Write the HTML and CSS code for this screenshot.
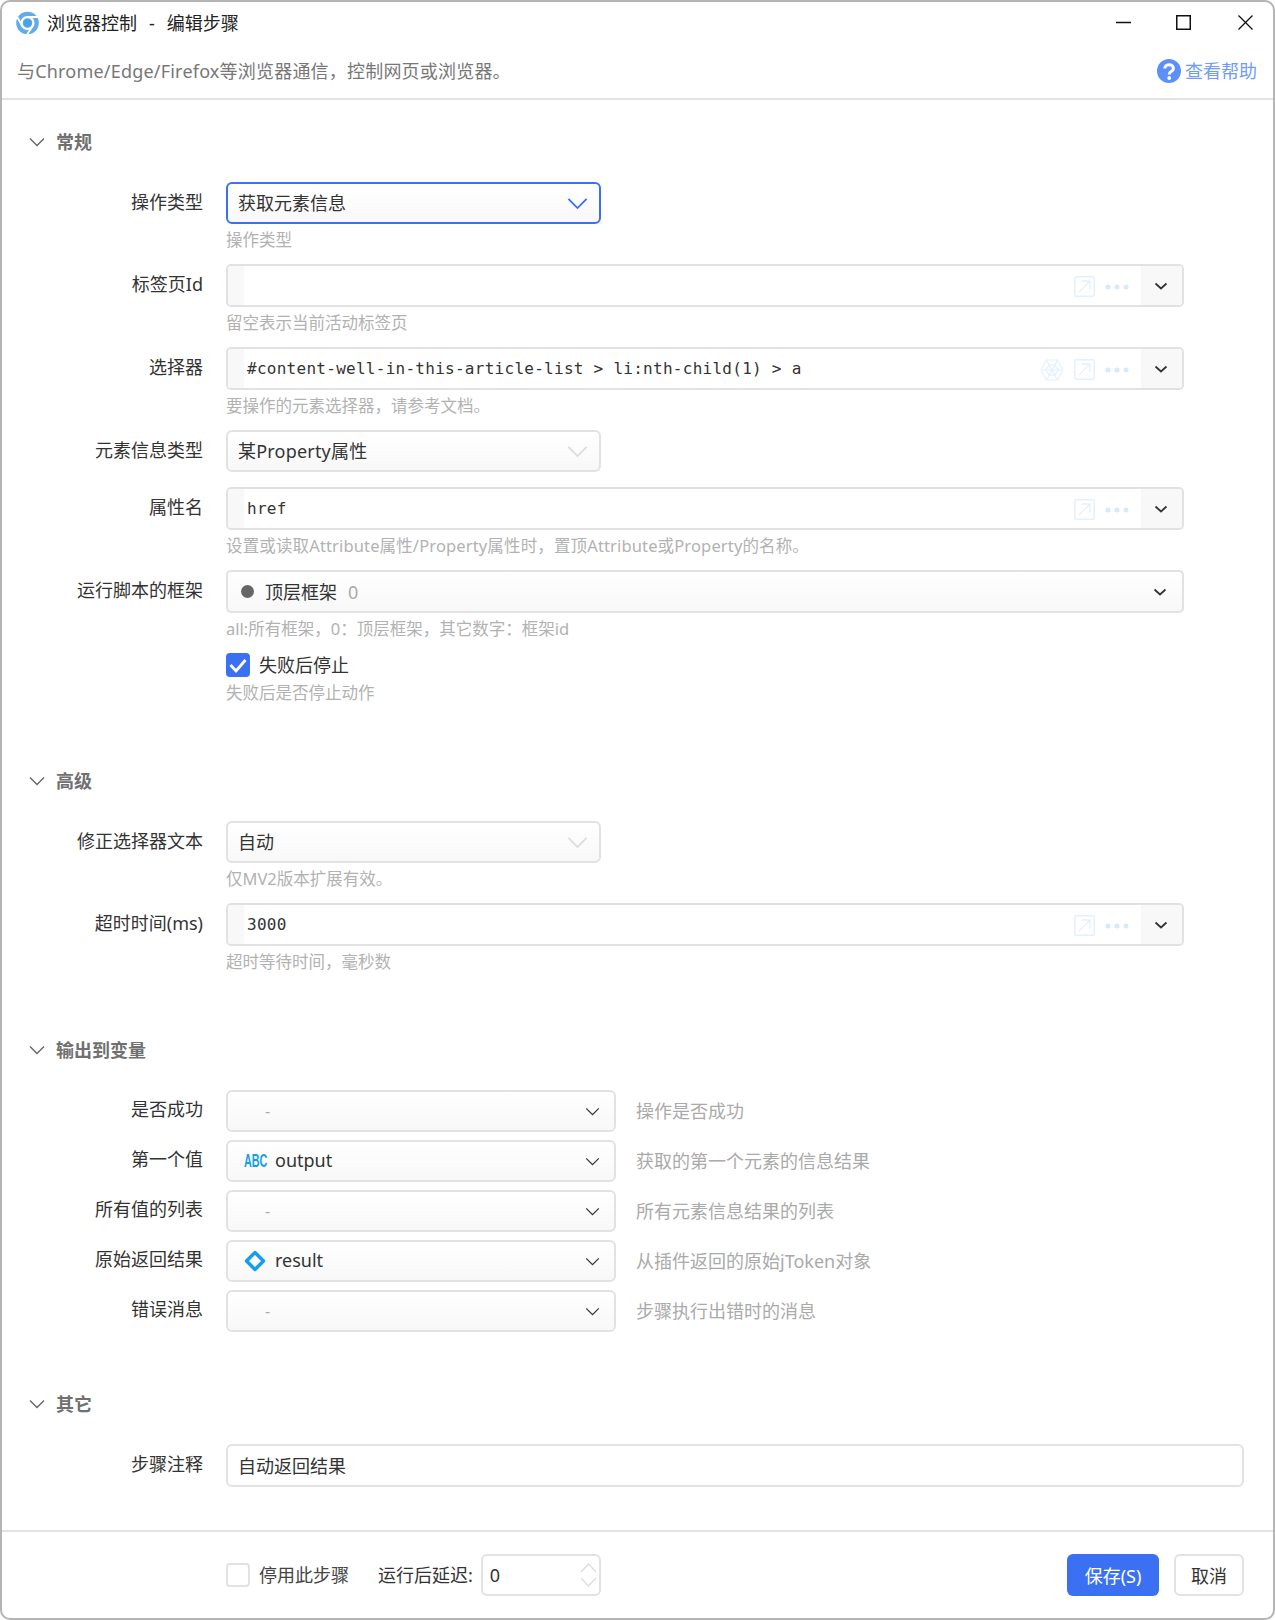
FILE: index.html
```html
<!DOCTYPE html>
<html lang="zh-CN">
<head>
<meta charset="utf-8">
<title>浏览器控制 - 编辑步骤</title>
<link rel="stylesheet" href="styles.css">
</head>
<body>
<svg class="defs" width="0" height="0" aria-hidden="true">
  <symbol id="chev" viewBox="0 0 16 10"><path d="M1 1.5 L8 8.5 L15 1.5" fill="none" stroke="currentColor" stroke-width="1.4"/></symbol>
  <symbol id="chevb" viewBox="0 0 14 8"><path d="M1.5 1.5 L7 6.5 L12.5 1.5" fill="none" stroke="currentColor" stroke-width="1.8"/></symbol>
  <symbol id="open" viewBox="0 0 21 21"><rect x=".75" y=".75" width="19.5" height="19.5" rx="1.5" fill="none" stroke="#e3f0ff" stroke-width="1.5"/><path d="M5 16 L16 5 M8 5 H16 V13" fill="none" stroke="#e3f0ff" stroke-width="1.3"/></symbol>
  <symbol id="dots" viewBox="0 0 24 6"><circle cx="3" cy="3" r="2.5" fill="#d6e9ff"/><circle cx="12" cy="3" r="2.5" fill="#d6e9ff"/><circle cx="21" cy="3" r="2.5" fill="#d6e9ff"/></symbol>
  <symbol id="web" viewBox="0 0 24 22"><g fill="none" stroke="#e3f0ff" stroke-width="1.2"><path d="M6.5 1 H17.5 L23 11 L17.5 21 H6.5 L1 11 Z"/><path d="M9 6 H15 L18 11 L15 16 H9 L6 11 Z"/><path d="M6.5 1 L17.5 21 M17.5 1 L6.5 21 M1 11 H23"/></g></symbol>
</svg>
<div class="window">
  <header class="head">
    <div class="titlebar">
      <svg class="logo" viewBox="0 0 24 24"><circle cx="12" cy="12" r="11.8" fill="#5fabec"/><circle cx="12" cy="12" r="6.2" fill="none" stroke="#fff" stroke-width="2.4"/><path d="M12 5.8 H23 M6.6 15.2 L1.4 6 M17.4 15.2 L11.5 24" fill="none" stroke="#fff" stroke-width="2"/><circle cx="12" cy="12" r="4" fill="#4f9fe6"/></svg>
      <span class="title">浏览器控制&nbsp;&nbsp;-&nbsp;&nbsp;编辑步骤</span>
      <div class="winctl">
        <svg class="wmin" viewBox="0 0 15 15"><path d="M0 7.5 H15" stroke="#111" stroke-width="1.3"/></svg>
        <svg class="wmax" viewBox="0 0 15 15"><rect x=".75" y=".75" width="13.5" height="13.5" fill="none" stroke="#111" stroke-width="1.5"/></svg>
        <svg class="wclose" viewBox="0 0 15 15"><path d="M.5 .5 L14.5 14.5 M14.5 .5 L.5 14.5" stroke="#111" stroke-width="1.3"/></svg>
      </div>
    </div>
    <div class="subbar">
      <span class="desc">与Chrome/Edge/Firefox等浏览器通信，控制网页或浏览器。</span>
      <a class="help"><svg class="help-i" viewBox="0 0 24 24"><circle cx="12" cy="12" r="12" fill="#5b8ff9"/><path d="M7.8 9.6 C7.8 4.4 16.4 4.4 16.4 9.4 C16.4 12.4 12.2 12 12.2 15.4" fill="none" stroke="#fff" stroke-width="3"/><circle cx="12.2" cy="19" r="1.9" fill="#fff"/></svg>查看帮助</a>
    </div>
  </header>

  <main class="main">
    <section class="sec sec-first">
      <h2 class="sec-h"><svg class="sec-c"><use href="#chev"/></svg>常规</h2>
      <div class="field">
        <label class="lab">操作类型</label>
        <div class="ctl">
          <div class="sel sel-focus"><span class="val">获取元素信息</span><svg class="sel-c blue"><use href="#chev"/></svg></div>
          <p class="hint">操作类型</p>
        </div>
      </div>
      <div class="field">
        <label class="lab">标签页Id</label>
        <div class="ctl">
          <div class="inp"><span class="strip"></span><span class="mono"></span><svg class="i-open"><use href="#open"/></svg><svg class="i-dots"><use href="#dots"/></svg><span class="drop"><svg class="drop-c"><use href="#chevb"/></svg></span></div>
          <p class="hint">留空表示当前活动标签页</p>
        </div>
      </div>
      <div class="field">
        <label class="lab">选择器</label>
        <div class="ctl">
          <div class="inp"><span class="strip"></span><span class="mono">#content-well-in-this-article-list &gt; li:nth-child(1) &gt; a</span><svg class="i-web"><use href="#web"/></svg><svg class="i-open"><use href="#open"/></svg><svg class="i-dots"><use href="#dots"/></svg><span class="drop"><svg class="drop-c"><use href="#chevb"/></svg></span></div>
          <p class="hint">要操作的元素选择器，请参考文档。</p>
        </div>
      </div>
      <div class="field field-nohint">
        <label class="lab">元素信息类型</label>
        <div class="ctl">
          <div class="sel"><span class="val val-latin">某Property属性</span><svg class="sel-c pale"><use href="#chev"/></svg></div>
        </div>
      </div>
      <div class="field">
        <label class="lab">属性名</label>
        <div class="ctl">
          <div class="inp"><span class="strip"></span><span class="mono">href</span><svg class="i-open"><use href="#open"/></svg><svg class="i-dots"><use href="#dots"/></svg><span class="drop"><svg class="drop-c"><use href="#chevb"/></svg></span></div>
          <p class="hint hint-latin">设置或读取Attribute属性/Property属性时，置顶Attribute或Property的名称。</p>
        </div>
      </div>
      <div class="field">
        <label class="lab">运行脚本的框架</label>
        <div class="ctl">
          <div class="inp inp-frame"><i class="dot"></i><span class="val">顶层框架</span><span class="frame-n">0</span><svg class="drop-c frame-c"><use href="#chevb"/></svg></div>
          <p class="hint">all:所有框架，0：顶层框架，其它数字：框架id</p>
        </div>
      </div>
      <div class="field field-last">
        <span class="lab"></span>
        <div class="ctl">
          <div class="chk-row"><span class="chk chk-on"><svg viewBox="0 0 24 24" class="chk-m"><path d="M4.5 12 L10 18 L19.5 7" fill="none" stroke="#fff" stroke-width="2.8"/></svg></span><span class="chk-t">失败后停止</span></div>
          <p class="hint">失败后是否停止动作</p>
        </div>
      </div>
    </section>

    <section class="sec sec-adv">
      <h2 class="sec-h"><svg class="sec-c"><use href="#chev"/></svg>高级</h2>
      <div class="field">
        <label class="lab">修正选择器文本</label>
        <div class="ctl">
          <div class="sel"><span class="val">自动</span><svg class="sel-c pale"><use href="#chev"/></svg></div>
          <p class="hint">仅MV2版本扩展有效。</p>
        </div>
      </div>
      <div class="field field-last">
        <label class="lab">超时时间(ms)</label>
        <div class="ctl">
          <div class="inp"><span class="strip"></span><span class="mono">3000</span><svg class="i-open"><use href="#open"/></svg><svg class="i-dots"><use href="#dots"/></svg><span class="drop"><svg class="drop-c"><use href="#chevb"/></svg></span></div>
          <p class="hint">超时等待时间，毫秒数</p>
        </div>
      </div>
    </section>

    <section class="sec sec-out">
      <h2 class="sec-h"><svg class="sec-c"><use href="#chev"/></svg>输出到变量</h2>
      <div class="out">
        <label class="lab">是否成功</label>
        <div class="osel"><span class="none">-</span><svg class="osel-c"><use href="#chev"/></svg></div>
        <span class="ohint">操作是否成功</span>
      </div>
      <div class="out">
        <label class="lab">第一个值</label>
        <div class="osel"><span class="abc">ABC</span><span class="oval">output</span><svg class="osel-c"><use href="#chev"/></svg></div>
        <span class="ohint">获取的第一个元素的信息结果</span>
      </div>
      <div class="out">
        <label class="lab">所有值的列表</label>
        <div class="osel"><span class="none">-</span><svg class="osel-c"><use href="#chev"/></svg></div>
        <span class="ohint">所有元素信息结果的列表</span>
      </div>
      <div class="out">
        <label class="lab">原始返回结果</label>
        <div class="osel"><svg class="diamond" viewBox="0 0 22 22"><path d="M11 2.5 L19.5 11 L11 19.5 L2.5 11 Z" fill="none" stroke="#129fe6" stroke-width="3.4" stroke-linejoin="round"/></svg><span class="oval">result</span><svg class="osel-c"><use href="#chev"/></svg></div>
        <span class="ohint">从插件返回的原始jToken对象</span>
      </div>
      <div class="out">
        <label class="lab">错误消息</label>
        <div class="osel"><span class="none">-</span><svg class="osel-c"><use href="#chev"/></svg></div>
        <span class="ohint">步骤执行出错时的消息</span>
      </div>
    </section>

    <section class="sec sec-other">
      <h2 class="sec-h"><svg class="sec-c"><use href="#chev"/></svg>其它</h2>
      <div class="field field-wide">
        <label class="lab">步骤注释</label>
        <div class="ctl"><div class="text"><span class="val">自动返回结果</span></div></div>
      </div>
    </section>
  </main>

  <footer class="foot">
    <span class="chk"></span><span class="chk-t foot-t">停用此步骤</span>
    <span class="delay">运行后延迟:</span>
    <div class="num"><span class="num-v">0</span><svg class="spin" viewBox="0 0 17 26"><path d="M1 10 L8.5 2 L16 10 M1 16 L8.5 24 L16 16" fill="none" stroke="#dcdcdc" stroke-width="1.3"/></svg></div>
    <button class="btn btn-save">保存(S)</button>
    <button class="btn btn-cancel">取消</button>
  </footer>
</div>
</body>
</html>
```
FILE: styles.css
```css
* { box-sizing: border-box; }
html, body { margin: 0; padding: 0; background: #fff; }
body { font-family: "Noto Sans", "Noto Sans CJK SC", sans-serif; color: #333; font-size: 18px; }
.defs { position: absolute; }
p, h2 { margin: 0; }

.window { width: 1275px; height: 1620px; border: 2px solid #b4b4b4; border-radius: 10px; display: flex; flex-direction: column; background: #fff; overflow: hidden; }

.head { border-bottom: 2px solid #e2e2e2; height: 98px; flex: none; }
.titlebar { height: 41px; display: flex; align-items: center; padding-left: 14px; }
.logo { width: 23px; height: 24px; margin-right: 8px; }
.title { font-size: 18px; color: #222; line-height: 24px; word-spacing: 1.3px; }
.winctl { margin-left: auto; display: flex; align-items: center; padding-right: 20px; }
.wmin, .wmax, .wclose { width: 15px; height: 15px; display: block; }
.wmax { margin-left: 45px; }
.wclose { margin-left: 47px; }
.subbar { height: 55px; display: flex; align-items: center; justify-content: space-between; padding: 0 16px 0 15px; }
.desc { font-size: 18px; line-height: 24px; color: #777; letter-spacing: .2px; }
.help { display: flex; align-items: center; color: #6f9bfa; font-size: 18px; line-height: 24px; }
.help-i { width: 24px; height: 24px; margin-right: 4px; }

.main { flex: 1; }
.sec-first { padding-top: 30px; }
.sec-adv { margin-top: 64px; }
.sec-out { margin-top: 64px; }
.sec-other { margin-top: 61px; }
.sec-h { display: flex; align-items: center; height: 24px; margin-bottom: 28px; padding-left: 27px; font-size: 18px; font-weight: 700; color: #707070; line-height: 24px; }
.sec-c { width: 16px; height: 10px; margin-right: 11px; color: #666; }

.field { display: grid; grid-template-columns: 201px 1fr; column-gap: 23px; margin-bottom: 12px; }
.field-nohint { margin-bottom: 15px; }
.field-last, .field-wide { margin-bottom: 0; }
.lab { text-align: right; font-size: 18px; line-height: 40px; color: #333; font-weight: 400; }
.ctl { min-width: 0; }
.hint { font-size: 16.5px; line-height: 24px; margin-top: 4px; color: #b2b2b2; white-space: nowrap; }
.hint-latin { letter-spacing: .14px; }

.sel { width: 375px; height: 42px; border: 2px solid #e2e2e2; border-radius: 6px; background: linear-gradient(#fff, #f8f8f8); display: flex; align-items: center; padding: 0 10px; justify-content: space-between; }
.sel-focus { border-color: #3b70f3; }
.val { font-size: 18px; line-height: 24px; color: #333; }
.val-latin { letter-spacing: .2px; }
.sel-c { width: 21px; height: 13px; margin-right: 1px; }
.blue { color: #3b70f3; }
.pale { color: #dcdcdc; }

.inp { width: 958px; height: 43px; border: 2px solid #e2e2e2; border-radius: 5px; display: flex; align-items: center; overflow: hidden; background: #fff; }
.strip { width: 16px; align-self: stretch; background: #f8f8f8; flex: none; }
.mono { font-family: "DejaVu Sans Mono", monospace; font-size: 16px; letter-spacing: .27px; line-height: 24px; color: #333; margin-left: 3px; margin-right: auto; white-space: pre; }
.i-web { width: 24px; height: 22px; margin: 2px 10px 0 0; }
.i-open { width: 21px; height: 21px; margin: 2px 10px 0 0; }
.i-dots { width: 24px; height: 6px; margin: 2px 12px 0 0; }
.drop { width: 41px; align-self: stretch; background: #f8f8f8; display: flex; align-items: center; justify-content: center; flex: none; padding-right: 2px; }
.drop-c { width: 14px; height: 8px; color: #333; }
.inp-frame { background: linear-gradient(#fff, #f8f8f8); padding-left: 13px; }
.dot { width: 13px; height: 13px; border-radius: 50%; background: #666; margin-right: 11px; }
.frame-n { color: #aaa; margin-left: 11px; margin-right: auto; font-size: 18px; line-height: 24px; }
.frame-c { margin-right: 15px; }

.chk-row { display: flex; align-items: center; height: 24px; }
.chk { width: 24px; height: 24px; border: 2px solid #e2e2e2; border-radius: 4px; background: #fff; display: inline-block; flex: none; }
.chk-on { background: #3b70f3; border-color: #3b70f3; display: flex; align-items: center; justify-content: center; }
.chk-m { width: 24px; height: 24px; flex: none; }
.chk-t { margin-left: 9px; font-size: 18px; line-height: 24px; color: #333; }

.out { display: grid; grid-template-columns: 201px 413px auto; height: 41px; margin-bottom: 9px; }
.out .lab { line-height: 38px; }
.osel { margin-left: 23px; width: 390px; height: 42px; border: 2px solid #e2e2e2; border-radius: 6px; background: linear-gradient(#fff, #f8f8f8); display: flex; align-items: center; padding-left: 16px; }
.none { margin-left: 21px; color: #aaa; font-size: 16px; line-height: 24px; }
.abc { width: 22px; font-family: "Liberation Sans", sans-serif; font-weight: 700; font-size: 18px; line-height: 24px; color: #129fe6; display: inline-block; transform: scaleX(.6); transform-origin: left center; white-space: nowrap; }
.diamond { width: 22px; height: 22px; }
.oval { margin: 0 0 2px 9px; font-size: 18px; line-height: 24px; color: #333; }
.osel-c { width: 15px; height: 9px; margin-left: auto; margin-right: 14px; color: #333; }
.ohint { margin-left: 20px; font-size: 18px; line-height: 43px; color: #aaa; white-space: nowrap; }

.text { width: 1018px; height: 43px; border: 2px solid #e2e2e2; border-radius: 6px; display: flex; align-items: center; padding-left: 10px; background: #fff; }

.foot { height: 88px; flex: none; border-top: 2px solid #e2e2e2; display: flex; align-items: center; padding: 0 29px 0 224px; }
.foot-t { color: #444; }
.delay { margin-left: 29px; font-size: 18px; line-height: 24px; color: #333; }
.num { width: 120px; height: 42px; margin-left: 8px; border: 2px solid #e2e2e2; border-radius: 6px; display: flex; align-items: center; padding-left: 7px; }
.num-v { font-size: 18px; line-height: 24px; color: #333; }
.spin { width: 17px; height: 26px; margin-left: auto; margin-right: 2px; }
.btn { height: 42px; border-radius: 6px; font-family: inherit; font-size: 18px; padding: 0; }
.btn-save { width: 92px; margin-left: auto; background: #3b70f3; color: #fff; border: none; }
.btn-cancel { width: 70px; margin-left: 15px; background: #fff; color: #333; border: 2px solid #e2e2e2; }
```
